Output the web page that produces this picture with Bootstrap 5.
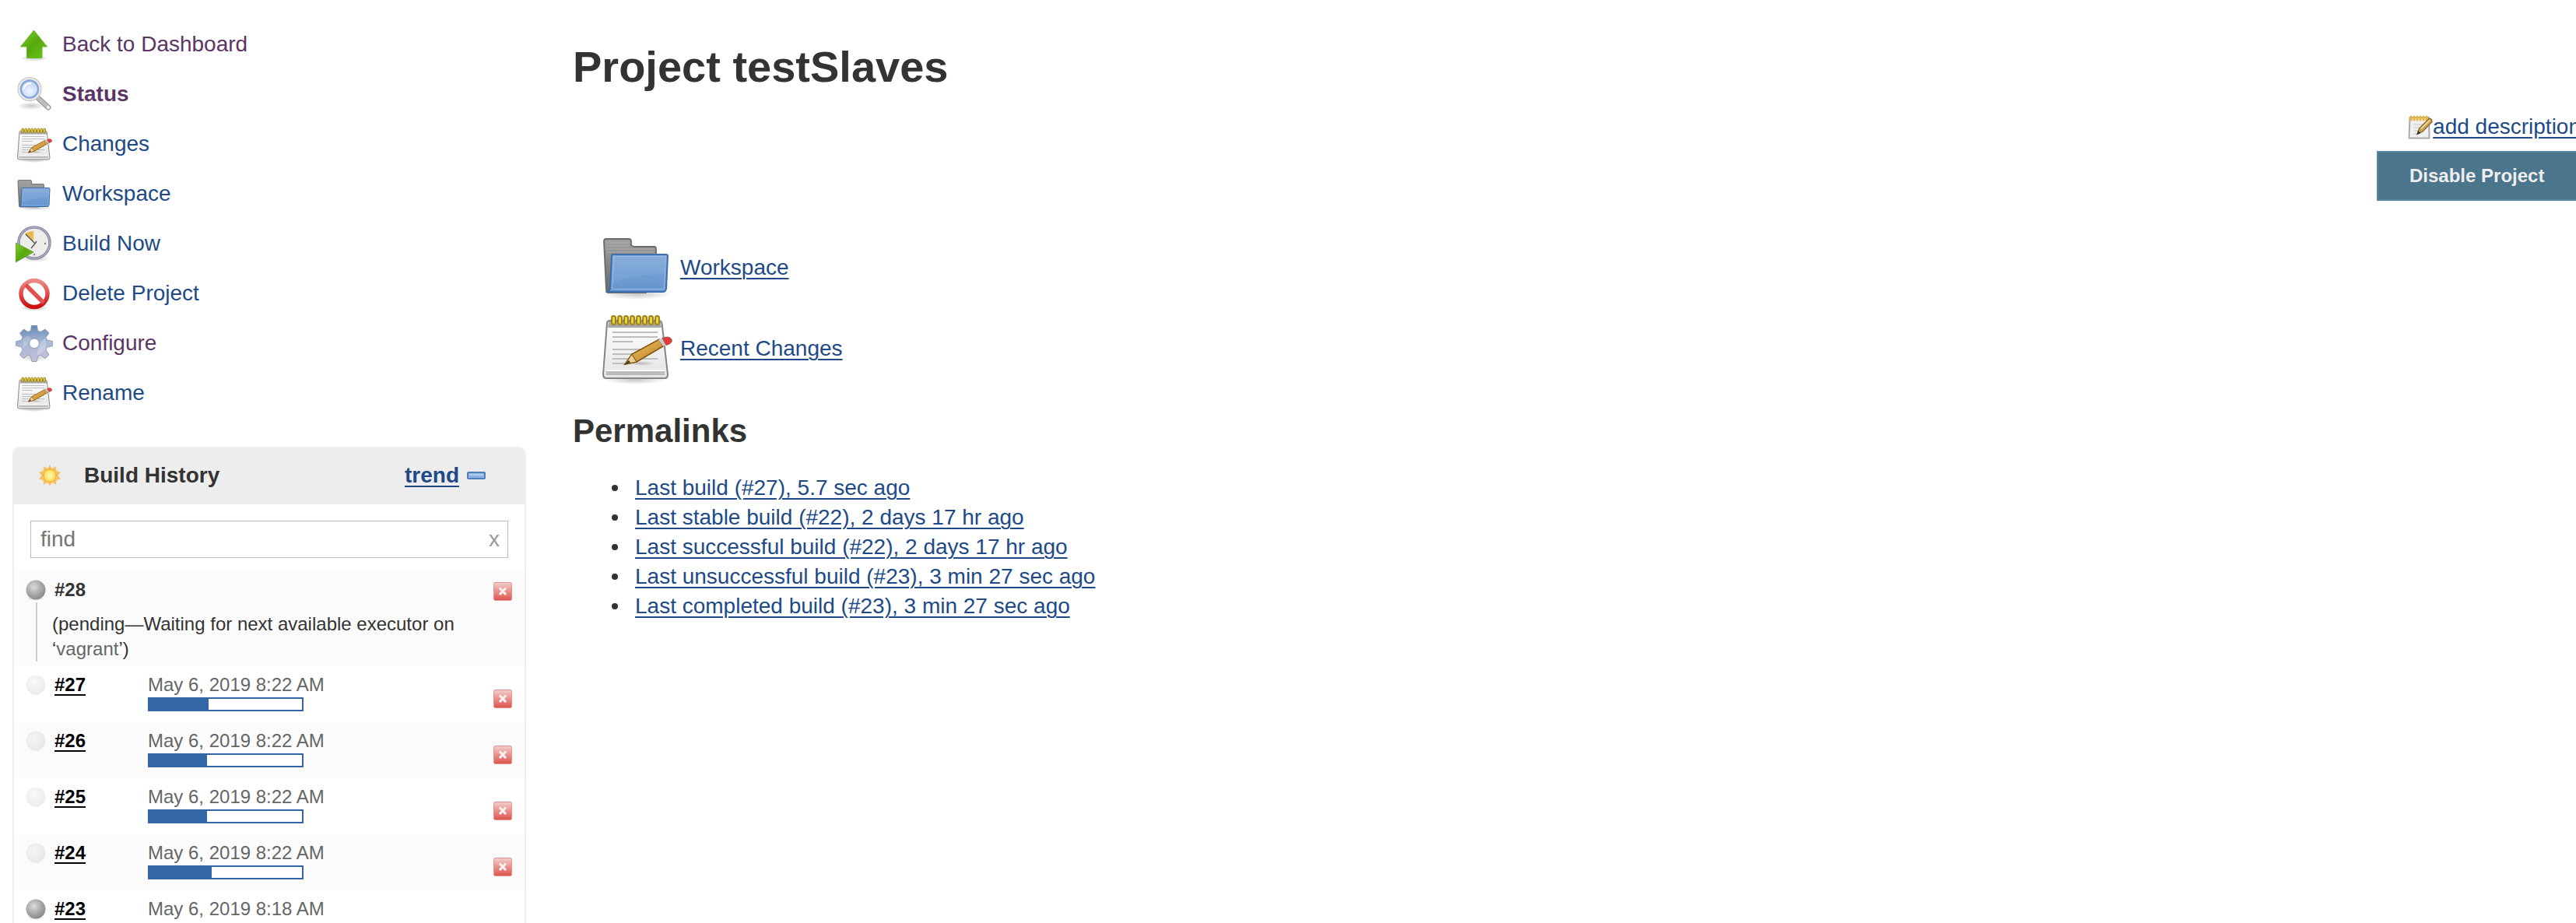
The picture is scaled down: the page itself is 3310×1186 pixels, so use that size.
<!DOCTYPE html>
<html lang="en">
<head>
<meta charset="utf-8">
<meta name="viewport" content="width=device-width, initial-scale=1">
<title>testSlaves [Jenkins]</title>
<link href="https://cdn.jsdelivr.net/npm/bootstrap@5.3.0/dist/css/bootstrap.min.css" rel="stylesheet">
<style>
body{font-family:"Liberation Sans",Arial,sans-serif;font-size:28px;line-height:38px;color:#333;background:#fff;overflow-x:hidden}
a{color:#204a87;text-decoration-thickness:2px;text-underline-offset:4px}
.side-panel{width:676px;padding:26px 0 0 16px}
.tasks{padding-left:4px;margin-bottom:36px}
.task-link{height:64px;gap:12px;text-decoration:none}
.task-link span{padding-bottom:2px}
.task-link.visited{color:#5c3566}
.icon-md{width:48px;height:48px}
.icon-xl{width:96px;height:96px}
.icon-sm{width:32px;height:32px}
.history{border:2px solid #eee;border-bottom:0;border-radius:10px 10px 0 0;font-size:24px;line-height:32px}
.history-head{height:74px;margin-top:-2px;padding:0 50px 0 30px;background:#ededed;border-radius:10px 10px 0 0;font-size:28px}
.history-head h2{font-size:28px;font-weight:700;margin:0 0 0 28px}
.history-head .btn-fold{border:0;background:none;padding:0;margin-left:10px}
.find-box{margin:21px 21px 17px;height:48px;border:1px solid #bbb;font-size:28px}
.find-box input{border:0;padding:0 12px;color:#333;font-size:28px;min-width:0;outline:0}
.find-box input::placeholder{color:#757575}
.find-box button{border:0;background:none;color:#999;padding:0 10px}
.build-row{height:72px;padding:0 16px 0 12px}
.build-row.pending{height:auto;padding-bottom:6px}
.build-row:nth-child(odd){background:#fbfbfb}
.build-id{width:120px;margin-left:8px;font-weight:700}
.build-id a{color:#000}
.build-line{padding-top:8px}
.build-date{color:#666}
.running{opacity:.16}
.cause{margin-left:16px;padding-left:19px;border-left:2px solid #ccc;color:#333;padding-top:12px}
.build-bar{width:200px;height:18px;border:2px solid #3465a4;background:#fff;border-radius:0}
.build-bar .progress-bar{background:#3465a4}
.btn-cancel{border:0;background:none;padding:0;width:24px;height:24px;line-height:0}
.build-row .late{margin-top:30px}
.build-row .early{margin-top:14px}
.main-panel{padding:56px 0 0 60px;min-width:0}
.main-panel h1{font-size:56px;line-height:60px;font-weight:700;margin:0}
.main-panel h2{font-size:42px;line-height:48px;font-weight:700;margin:34px 0 30px}
.actions{width:262px;margin:28px -6px 38px auto}
.btn-disable{height:64px;border:2px solid #5788a3;border-radius:0;background:#4b758b;color:#eee;font-size:24px;font-weight:700;padding:0 40px;margin-top:12px}
.quick{padding-left:34px;gap:8px}
.quick a{gap:8px}
.permalinks{padding-left:50px;margin:0}
.permalinks li{display:flex;align-items:center;gap:22px}
.permalinks li::before{content:"";width:8px;height:8px;border-radius:50%;background:#333}
</style>
<script src="https://cdn.jsdelivr.net/npm/bootstrap@5.3.0/dist/js/bootstrap.bundle.min.js" defer></script>
</head>
<body>
<svg width="0" height="0" class="position-absolute" aria-hidden="true">
<defs>
<linearGradient id="gGreen" x1="0" y1="0" x2="1" y2="1"><stop offset="0" stop-color="#7fd42c"/><stop offset=".5" stop-color="#57a80c"/><stop offset="1" stop-color="#6cc91a"/></linearGradient>
<linearGradient id="gBlue" x1="0" y1="0" x2="0" y2="1"><stop offset="0" stop-color="#80a8d6"/><stop offset="1" stop-color="#6395cf"/></linearGradient>
<linearGradient id="gGrey" x1="0" y1="0" x2="0" y2="1"><stop offset="0" stop-color="#a0a0a0"/><stop offset="1" stop-color="#6a6a6a"/></linearGradient>
<linearGradient id="gPaper" x1="0" y1="0" x2="0" y2="1"><stop offset="0" stop-color="#fff"/><stop offset="1" stop-color="#e4e4e4"/></linearGradient>
<linearGradient id="gRed" x1="0" y1="0" x2="0" y2="1"><stop offset="0" stop-color="#ec8b86"/><stop offset="1" stop-color="#cc1111"/></linearGradient>
<linearGradient id="gCancel" x1="0" y1="0" x2="0" y2="1"><stop offset="0" stop-color="#f2cfcd"/><stop offset="1" stop-color="#de524d"/></linearGradient>
<linearGradient id="gGear" x1=".5" y1="0" x2=".6" y2="1"><stop offset="0" stop-color="#6488b5"/><stop offset=".5" stop-color="#a9b9d6"/><stop offset="1" stop-color="#c3bfd8"/></linearGradient>
<linearGradient id="gPencil" x1="0" y1="0" x2="1" y2="1"><stop offset="0" stop-color="#f2cc72"/><stop offset="1" stop-color="#b87918"/></linearGradient>
<radialGradient id="gShade"><stop offset="0" stop-color="#000" stop-opacity=".22"/><stop offset="1" stop-color="#000" stop-opacity="0"/></radialGradient>
<radialGradient id="gBall" cx=".4" cy=".35" r=".65"><stop offset="0" stop-color="#dcdcdc"/><stop offset=".6" stop-color="#a8a8a8"/><stop offset="1" stop-color="#8c8c8c"/></radialGradient>
<radialGradient id="gLens" cx=".5" cy=".6"><stop offset="0" stop-color="#eef4fd"/><stop offset="1" stop-color="#bcd2f2"/></radialGradient>
<radialGradient id="gSun"><stop offset="0" stop-color="#fffbb0"/><stop offset="1" stop-color="#fadc50"/></radialGradient>
<symbol id="i-up" viewBox="0 0 48 48"><ellipse cx="24" cy="41" rx="18" ry="4" fill="url(#gShade)"/><path d="M23.500 5 40.500 26H34V40.500H14.500V26H6.500Z" fill="url(#gGreen)" stroke="#6cb92c"/></symbol>
<symbol id="i-search" viewBox="0 0 48 48"><ellipse cx="20" cy="38" rx="18" ry="5" fill="url(#gShade)"/><path d="M29 28 42 40" stroke="#999" stroke-width="7" stroke-linecap="round"/><path d="M29 28 42 40" stroke="#bdbdbd" stroke-width="4.500" stroke-linecap="round"/><circle cx="42" cy="40" r="2" fill="#f4f4f4"/><circle cx="18" cy="16.500" r="13.500" fill="url(#gLens)" stroke="#bdbdbd" stroke-width="4"/><circle cx="18" cy="16.500" r="13.500" fill="none" stroke="#ececec" stroke-width="2"/><circle cx="18" cy="16.500" r="11" fill="none" stroke="#7ea6dc" stroke-width="2"/><path d="M10 17Q12 9 20 9" stroke="#fff" stroke-width="2" fill="none"/></symbol>
<symbol id="i-note" viewBox="0 0 48 48"><ellipse cx="23" cy="44" rx="20" ry="3" fill="url(#gShade)"/><path d="M5 7.500Q5 6 7 6H38Q40 6 40.300 8L44 40.500Q44 43 42 43H4.500Q2.500 43 2.500 40.500Z" fill="url(#gPaper)" stroke="#858585"/><path d="M6 6.500H39.500L40 10.500H5.500Z" fill="#a8a8a8"/><path d="M4.500 38.500H42V41H4.500Z" fill="#bcbcbc"/><path d="M5 38H42" stroke="#fff"/><g fill="#e4cf45" stroke="#a08414"><rect x="8" y="3" width="2.500" height="5.500" rx="1.200"/><rect x="12" y="3" width="2.500" height="5.500" rx="1.200"/><rect x="16" y="3" width="2.500" height="5.500" rx="1.200"/><rect x="20" y="3" width="2.500" height="5.500" rx="1.200"/><rect x="24" y="3" width="2.500" height="5.500" rx="1.200"/><rect x="28" y="3" width="2.500" height="5.500" rx="1.200"/><rect x="32" y="3" width="2.500" height="5.500" rx="1.200"/><rect x="36" y="3" width="2.500" height="5.500" rx="1.200"/></g><path d="M8.500 13.500H37.500M8.500 16.500H37.500M8.500 19.500H21.500M8.500 24.500H33M8.500 27.500H25M8.500 30.500H20M28 30.500H37.500M8.500 33.500H17" stroke="#bdbdbd" stroke-width="1"/><ellipse cx="27" cy="33.500" rx="9" ry="1.500" fill="url(#gShade)"/><path d="M16.500 34 21 27.500 38.500 18 41 22.500 24 32.500Z" fill="url(#gPencil)" stroke="#85540c" stroke-width=".8"/><path d="M16.500 34 21 27.500 24 32.500Z" fill="#e9cf9c" stroke="#85540c" stroke-width=".6"/><path d="M16.300 34.200 19 31.500 20 32.900Z" fill="#3d3320"/><path d="M38 18.300 40.500 17.200 43 21.500 41 22.500Z" fill="#c9c9c9"/><path d="M40.500 17.200Q45 15.500 46.500 18 47.500 20.500 43 21.800Z" fill="#e33b3b" stroke="#a55" stroke-width=".5"/></symbol>
<symbol id="i-folder" viewBox="0 0 48 48"><ellipse cx="24" cy="41" rx="23" ry="3.500" fill="url(#gShade)"/><path d="M3 7Q3 5.500 4.500 5.500H19Q20.500 5.500 20.500 7V9.500L22 10.500H35.500Q36.500 10.500 36.500 12V20L30 40H6Q4.500 40 4.500 38.500Z" fill="url(#gGrey)" stroke="#6b6b6b" stroke-width=".9"/><path d="M4.500 8H19M4.500 10H19M4.500 12H35M5 14H35" stroke="#b4b4b4" stroke-width=".4"/><path d="M8.500 15.500H43Q44 15.500 44 16.500L43 37.500Q42.500 39.500 41 39.500H5.500Q7 38.500 7 36L8 16.500Q8 15.500 8.500 15.500Z" fill="url(#gBlue)" stroke="#3d6eae"/><path d="M9.300 16.800H42.700L41.700 37.700H8.300Z" fill="none" stroke="#9cbde4" stroke-width=".5"/><path d="M9 17.300H42.300L42 28Q22 28 8.500 34Z" fill="#fff" opacity=".07"/></symbol>
<symbol id="i-clock" viewBox="0 0 48 48"><ellipse cx="25" cy="42" rx="20" ry="5" fill="url(#gShade)"/><circle cx="24" cy="22" r="20" fill="#ecece8" stroke="#85859a" stroke-width="3.500"/><circle cx="24" cy="22" r="20" fill="none" stroke="#a6a6bd" stroke-width="2"/><path d="M23 20 12 11A16 16 0 0 1 23 7Z" fill="#eab94c"/><path d="M13 11 25 23 27 20M25 23 20 29" stroke="#555" stroke-width="1.400" fill="none"/><circle cx="38" cy="23" r="1.200" fill="#888"/><circle cx="24" cy="37" r="1.200" fill="#888"/><path d="M0 22 23 34 0 47Z" fill="url(#gGreen)" stroke="#6a9c44"/></symbol>
<symbol id="i-no" viewBox="0 0 48 48"><ellipse cx="24" cy="42" rx="20" ry="4" fill="url(#gShade)"/><circle cx="24" cy="23.500" r="17" fill="#fff" fill-opacity=".9" stroke="url(#gRed)" stroke-width="5.500"/><path d="M13 12 36 35" stroke="#e0504c" stroke-width="5.500"/></symbol>
<symbol id="i-gear" viewBox="0 0 48 48"><ellipse cx="24" cy="42" rx="17" ry="5" fill="url(#gShade)"/><path fill-rule="evenodd" d="M20.500 0H27.500L28.500 7 32 8.500 38 5 43 10 39 15.500 40.500 19 48 20.500V26.500L40.500 28 39 31.500 43 38 38 42.500 32 38.500 28.500 40 27 46.500H21L19.500 40 16 38.500 10 42.500 5.500 38 9 31.500 7.500 28 0 26V21L7.500 19 9 15.500 5.500 10 10.500 5 16 8.500 19.500 7ZM24 17A6.200 6.200 0 1 0 24 29.500 6.200 6.200 0 1 0 24 17Z" fill="url(#gGear)" stroke="#8790aa" stroke-width=".8"/><path d="M30 28Q34 17 39 17L39 30Q33 38 27 38Z" fill="#fff" opacity=".25"/><path d="M9 18Q17 10 20 18L10 30Z" fill="#fff" opacity=".2"/></symbol>
<symbol id="i-sun" viewBox="0 0 32 32"><path d="M16 2 18.500 7 24 4.500 24.500 10 30 11.500 26.500 16 30 20.500 24.500 22 24 27.500 18.500 25 16 30 13.500 25 8 27.500 7.500 22 2 20.500 5.500 16 2 11.500 7.500 10 8 4.500 13.500 7Z" fill="#f9bf62"/><circle cx="16" cy="16" r="8" fill="url(#gSun)" stroke="#f3ac3e"/></symbol>
<symbol id="i-ball" viewBox="0 0 32 32"><ellipse cx="16" cy="27" rx="12" ry="3" fill="url(#gShade)"/><circle cx="16" cy="16" r="12.500" fill="url(#gBall)"/></symbol>
<symbol id="i-cancel" viewBox="0 0 24 24"><rect x=".5" y=".5" width="23" height="23" rx="2" fill="url(#gCancel)" stroke="#e8908c"/><path d="M8 7.500 16 16M16 7.500 8 16" stroke="#fff3f0" stroke-width="3"/></symbol>
<symbol id="i-edit" viewBox="0 0 32 32"><path d="M2.500 4H27L27.500 30.500H1.500Z" fill="#f0f0f0" stroke="#aaa" stroke-width="2"/><path d="M7 13H22M7 17H19M7 21H15M7 25H12" stroke="#c8c8c8"/><path d="M4 7V3M8 7V3M12 7V3M16 7V3M20 7V3M24 7V3" stroke="#e5b73b" stroke-width="3" stroke-linecap="round"/><path d="M12 25.500 14.500 18 27 5.500Q31 5 31 9.500L19 22Z" fill="#c9a25a" stroke="#8a6420" stroke-width="1.200"/><path d="M17 18.500 28 7.500" stroke="#ecd49b" stroke-width="2"/><path d="M11.500 26 13 21 16.500 24Z" fill="#333"/></symbol>
<symbol id="i-minus" viewBox="0 0 24 12"><rect x="1" y="2" width="22" height="8" rx="1" fill="#8fb2dc" stroke="#4f7fbd" stroke-width="2"/><path d="M3 5H21" stroke="#b5cdea" stroke-width="2"/></symbol>
</defs>
</svg>
<div class="d-flex">
<aside class="side-panel flex-shrink-0">
<nav class="tasks nav flex-column">
<a class="task-link visited d-flex align-items-center" href="#"><svg class="icon-md"><use href="#i-up"/></svg><span>Back to Dashboard</span></a>
<a class="task-link visited fw-bold d-flex align-items-center" href="#"><svg class="icon-md"><use href="#i-search"/></svg><span>Status</span></a>
<a class="task-link d-flex align-items-center" href="#"><svg class="icon-md"><use href="#i-note"/></svg><span>Changes</span></a>
<a class="task-link d-flex align-items-center" href="#"><svg class="icon-md"><use href="#i-folder"/></svg><span>Workspace</span></a>
<a class="task-link d-flex align-items-center" href="#"><svg class="icon-md"><use href="#i-clock"/></svg><span>Build Now</span></a>
<a class="task-link d-flex align-items-center" href="#"><svg class="icon-md"><use href="#i-no"/></svg><span>Delete Project</span></a>
<a class="task-link visited d-flex align-items-center" href="#"><svg class="icon-md"><use href="#i-gear"/></svg><span>Configure</span></a>
<a class="task-link d-flex align-items-center" href="#"><svg class="icon-md"><use href="#i-note"/></svg><span>Rename</span></a>
</nav>
<section class="history">
<header class="history-head d-flex align-items-center">
<svg class="icon-sm"><use href="#i-sun"/></svg>
<h2>Build History</h2>
<a class="fw-bold ms-auto" href="#">trend</a>
<button class="btn-fold d-flex" type="button" aria-label="collapse"><svg width="24" height="12"><use href="#i-minus"/></svg></button>
</header>
<div class="find-box d-flex align-items-center">
<input class="flex-grow-1" type="text" placeholder="find" aria-label="find">
<button type="button" aria-label="clear">x</button>
</div>
<div class="builds">
<div class="build-row pending">
<div class="d-flex align-items-start">
<svg class="icon-sm mt-2"><use href="#i-ball"/></svg>
<div class="build-id build-line">#28</div>
<button class="btn-cancel early ms-auto" type="button" aria-label="cancel"><svg width="24" height="24"><use href="#i-cancel"/></svg></button>
</div>
<div class="cause">(pending—Waiting for next available executor on ‘<span class="build-date">vagrant</span>’)</div>
</div>
<div class="build-row d-flex align-items-start">
<svg class="icon-sm mt-2 running"><use href="#i-ball"/></svg>
<div class="build-id build-line"><a href="#">#27</a></div>
<div class="build-line"><div class="build-date">May 6, 2019 8:22 AM</div><div class="progress build-bar"><div class="progress-bar" style="width:39%"></div></div></div>
<button class="btn-cancel late ms-auto" type="button" aria-label="cancel"><svg width="24" height="24"><use href="#i-cancel"/></svg></button>
</div>
<div class="build-row d-flex align-items-start">
<svg class="icon-sm mt-2 running"><use href="#i-ball"/></svg>
<div class="build-id build-line"><a href="#">#26</a></div>
<div class="build-line"><div class="build-date">May 6, 2019 8:22 AM</div><div class="progress build-bar"><div class="progress-bar" style="width:38%"></div></div></div>
<button class="btn-cancel late ms-auto" type="button" aria-label="cancel"><svg width="24" height="24"><use href="#i-cancel"/></svg></button>
</div>
<div class="build-row d-flex align-items-start">
<svg class="icon-sm mt-2 running"><use href="#i-ball"/></svg>
<div class="build-id build-line"><a href="#">#25</a></div>
<div class="build-line"><div class="build-date">May 6, 2019 8:22 AM</div><div class="progress build-bar"><div class="progress-bar" style="width:38%"></div></div></div>
<button class="btn-cancel late ms-auto" type="button" aria-label="cancel"><svg width="24" height="24"><use href="#i-cancel"/></svg></button>
</div>
<div class="build-row d-flex align-items-start">
<svg class="icon-sm mt-2 running"><use href="#i-ball"/></svg>
<div class="build-id build-line"><a href="#">#24</a></div>
<div class="build-line"><div class="build-date">May 6, 2019 8:22 AM</div><div class="progress build-bar"><div class="progress-bar" style="width:41%"></div></div></div>
<button class="btn-cancel late ms-auto" type="button" aria-label="cancel"><svg width="24" height="24"><use href="#i-cancel"/></svg></button>
</div>
<div class="build-row d-flex align-items-start">
<svg class="icon-sm mt-2"><use href="#i-ball"/></svg>
<div class="build-id build-line"><a href="#">#23</a></div>
<div class="build-line"><div class="build-date">May 6, 2019 8:18 AM</div></div>
</div>
</div>
</section>
</aside>
<main class="main-panel flex-grow-1">
<h1>Project testSlaves</h1>
<div class="actions">
<a class="d-flex justify-content-end align-items-center text-nowrap text-decoration-none" href="#"><svg class="icon-sm"><use href="#i-edit"/></svg><span class="text-decoration-underline">add description</span></a>
<button class="btn-disable w-100 text-start text-nowrap" type="button">Disable Project</button>
</div>
<div class="quick d-flex flex-column align-items-start">
<a class="d-flex align-items-center" href="#"><svg class="icon-xl"><use href="#i-folder"/></svg><span>Workspace</span></a>
<a class="d-flex align-items-center" href="#"><svg class="icon-xl"><use href="#i-note"/></svg><span>Recent Changes</span></a>
</div>
<h2>Permalinks</h2>
<ul class="permalinks">
<li><a href="#">Last build (#27), 5.7 sec ago</a></li>
<li><a href="#">Last stable build (#22), 2 days 17 hr ago</a></li>
<li><a href="#">Last successful build (#22), 2 days 17 hr ago</a></li>
<li><a href="#">Last unsuccessful build (#23), 3 min 27 sec ago</a></li>
<li><a href="#">Last completed build (#23), 3 min 27 sec ago</a></li>
</ul>
</main>
</div>
</body>
</html>
